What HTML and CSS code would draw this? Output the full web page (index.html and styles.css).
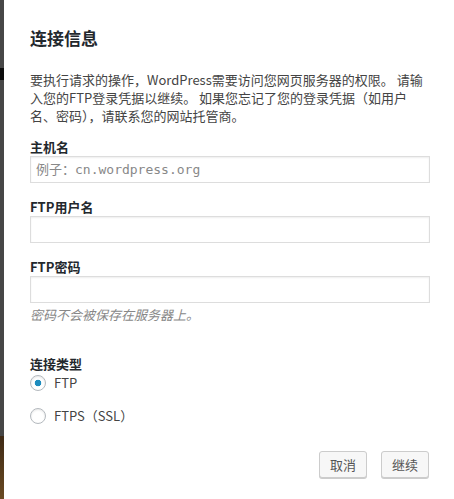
FILE: index.html
```html
<!DOCTYPE html>
<html lang="zh-CN">
<head>
    <meta charset="UTF-8">
    <title>连接信息</title>
    <link rel="stylesheet" href="styles.css">
</head>
<body>

    <!-- page behind the modal, only a thin strip shows -->
    <div class="backdrop"></div>

    <!-- FTP credentials dialog -->
    <div class="dialog">
        <h2 class="title">连接信息</h2>
        <p class="intro">要执行请求的操作，WordPress需要访问您网页服务器的权限。 请输入您的FTP登录凭据以继续。 如果您忘记了您的登录凭据（如用户名、密码），请联系您的网站托管商。</p>

        <label class="field-label" for="hostname">主机名</label>
        <input class="field" type="text" id="hostname" placeholder="例子：cn.wordpress.org">

        <label class="field-label" for="username">FTP用户名</label>
        <input class="field" type="text" id="username">

        <label class="field-label" for="password">FTP密码</label>
        <input class="field" type="password" id="password">
        <p class="note">密码不会被保存在服务器上。</p>

        <div class="conn-type">
            <span class="field-label">连接类型</span>
            <label class="radio-row"><input type="radio" name="type" checked> FTP</label>
            <label class="radio-row"><input type="radio" name="type"> FTPS（SSL）</label>
        </div>

        <div class="actions">
            <button class="btn" type="button">取消</button>
            <button class="btn" type="submit">继续</button>
        </div>
    </div>

</body>
</html>
```

FILE: styles.css
```css
* {
    margin: 0;
    padding: 0;
    box-sizing: border-box;
}
body {
    display: flex;
    min-height: 100vh;
    background: #fff;
    font-family: "Noto Sans CJK SC", "Open Sans", sans-serif;
    font-size: 13px;
    color: #444;
}
.backdrop {
    width: 4px;
    flex-shrink: 0;
    background: linear-gradient(to bottom,
        #474747 0, #474747 68px,
        #0d0d0d 68px, #0d0d0d 80px,
        #464646 80px, #464646 436px,
        #3f2a16 436px, #6a4a22 499px);
}
.dialog {
    flex: 1;
    display: flex;
    flex-direction: column;
    padding: 26px 24px 0 26px;
}
.title {
    font-size: 17px;
    line-height: 24px;
    font-weight: 700;
    color: #23282d;
    margin-bottom: 21px;
}
.intro {
    line-height: 18px;
    margin-bottom: 13px;
}
.field-label {
    display: block;
    line-height: 18px;
    font-weight: 700;
    color: #23282d;
}
.field {
    width: 100%;
    height: 27px;
    padding: 0 5px;
    border: 1px solid #ddd;
    box-shadow: inset 0 1px 2px rgba(0, 0, 0, 0.07);
    font-family: "DejaVu Sans Mono", "Noto Sans CJK SC", monospace;
    font-size: 13px;
    color: #32373c;
    outline: none;
    margin-bottom: 15px;
}
.field::placeholder {
    color: #888;
}
#password {
    margin-bottom: 3px;
}
.note {
    line-height: 18px;
    font-style: italic;
    color: #888;
    margin-bottom: 31px;
}
.conn-type .field-label {
    margin-bottom: 2px;
}
.radio-row {
    display: flex;
    align-items: center;
    gap: 8px;
    height: 16px;
    line-height: 16px;
    margin-bottom: 17px;
}
.radio-row input {
    appearance: none;
    width: 16px;
    height: 16px;
    border: 1px solid #b4b9be;
    border-radius: 50%;
    background: #fff;
    box-shadow: inset 0 1px 2px rgba(0, 0, 0, 0.1);
}
.radio-row input:checked {
    background: radial-gradient(circle, #1e8cbe 0, #1e8cbe 3px, #fff 3.6px);
}
.actions {
    display: flex;
    justify-content: flex-end;
    gap: 14px;
    padding-right: 1px;
    margin-top: 10px;
}
.btn {
    height: 27px;
    padding: 0 10px;
    border: 1px solid #ccc;
    border-radius: 3px;
    background: #f7f7f7;
    box-shadow: 0 1px 0 #ccc;
    font-family: "Noto Sans CJK SC", sans-serif;
    font-size: 13px;
    color: #555;
    cursor: pointer;
}
```
